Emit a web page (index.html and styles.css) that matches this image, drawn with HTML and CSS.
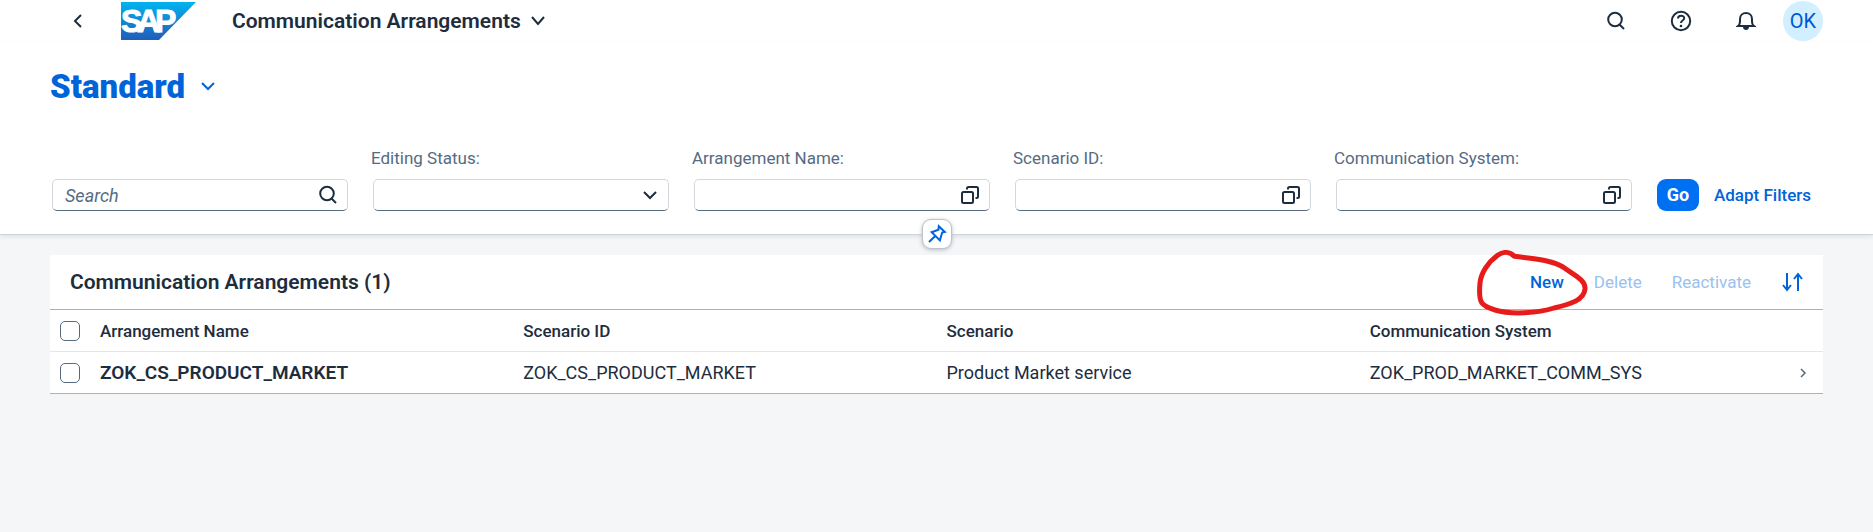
FILE: index.html
```html
<!DOCTYPE html>
<html lang="en">
<head>
<meta charset="utf-8">
<meta name="viewport" content="width=device-width, initial-scale=1">
<title>Communication Arrangements</title>
<link rel="stylesheet" href="styles.css">
</head>
<body>
<header class="shell">
  <button class="icon-btn back" aria-label="Back"><svg width="10" height="16" viewBox="0 0 10 16"><path d="M8 2L2 8l6 6"/></svg></button>
  <svg class="logo" width="75" height="38" viewBox="0 0 75 38" role="img" aria-label="SAP">
    <defs><linearGradient id="logo-fill" x1="0" y1="0" x2="0" y2="1"><stop offset="0" stop-color="#00b4f0"/><stop offset="1" stop-color="#225cb8"/></linearGradient></defs>
    <path class="logo-shape" d="M0 0h75L38 38H0z"/>
    <text class="logo-text" x="0 16 34" y="30">SAP</text>
  </svg>
  <button class="app-title">Communication Arrangements <svg width="14" height="10" viewBox="0 0 14 10"><path d="M1 1l6 7 6-7"/></svg></button>
  <div class="shell-actions">
    <button class="icon-btn" aria-label="Search"><svg width="20" height="20" viewBox="0 0 20 20"><circle cx="9" cy="8.500" r="6.800"/><path d="M13.500 13.500L18 18"/></svg></button>
    <button class="icon-btn" aria-label="Help"><svg width="22" height="22" viewBox="0 0 22 22"><circle cx="11" cy="11" r="9.200"/><path d="M8 8.600c0-4 6.200-3.800 6.200-.3 0 2.300-3.200 2.100-3.200 4.700"/><circle class="dot" cx="11" cy="16" r="1.300"/></svg></button>
    <button class="icon-btn" aria-label="Notifications"><svg width="20" height="20" viewBox="0 0 20 20"><path d="M2 15c1.500-1 2-2.500 2-5V8c0-8 12-8 12 0v2c0 2.500.5 4 2 5z"/><path class="dot" d="M7 16h6c0 4-6 4-6 0z"/></svg></button>
    <button class="avatar" aria-label="User OK">OK</button>
  </div>
</header>

<section class="filter-page">
  <button class="variant">Standard <svg width="14" height="10" viewBox="0 0 14 10"><path d="M1 1l6 6 6-6"/></svg></button>
  <form class="filters">
    <div class="filter">
      <div class="field"><input type="search" placeholder="Search" aria-label="Search arrangements"><svg width="20" height="20" viewBox="0 0 20 20"><circle cx="9" cy="8.500" r="6.800"/><path d="M13.500 13.500L18 18"/></svg></div>
    </div>
    <div class="filter">
      <label for="status">Editing Status:</label>
      <div class="field"><select id="status"><option></option></select><svg width="14" height="10" viewBox="0 0 14 10"><path d="M1 2l6 6 6-6"/></svg></div>
    </div>
    <div class="filter">
      <label for="name">Arrangement Name:</label>
      <div class="field"><input id="name" type="text"><svg width="20" height="20" viewBox="0 0 20 20"><rect x="2" y="7" width="11" height="11" rx="1.500"/><path d="M7 4.500V3.500Q7 2 8.500 2H16.500Q18 2 18 3.500V11.500Q18 13 16.500 13H15.500"/></svg></div>
    </div>
    <div class="filter">
      <label for="scenario">Scenario ID:</label>
      <div class="field"><input id="scenario" type="text"><svg width="20" height="20" viewBox="0 0 20 20"><rect x="2" y="7" width="11" height="11" rx="1.500"/><path d="M7 4.500V3.500Q7 2 8.500 2H16.500Q18 2 18 3.500V11.500Q18 13 16.500 13H15.500"/></svg></div>
    </div>
    <div class="filter">
      <label for="system">Communication System:</label>
      <div class="field"><input id="system" type="text"><svg width="20" height="20" viewBox="0 0 20 20"><rect x="2" y="7" width="11" height="11" rx="1.500"/><path d="M7 4.500V3.500Q7 2 8.500 2H16.500Q18 2 18 3.500V11.500Q18 13 16.500 13H15.500"/></svg></div>
    </div>
    <div class="filter-actions">
      <button class="go" type="button">Go</button>
      <button class="link-btn" type="button">Adapt Filters</button>
    </div>
  </form>
  <button class="pin" aria-label="Pin header"><svg width="20" height="20" viewBox="0 0 20 20"><path d="M11.800 2.200l6 5.700-2.600.6-2.300 7.900-8.200-8.200 6.700-2.400zM8.500 11.700L2 18"/></svg></button>
</section>

<main class="content">
  <div class="toolbar">
    <h2>Communication Arrangements (1)</h2>
    <div class="tools">
      <div class="marked">
        <button class="link-btn">New</button>
        <svg class="ring" width="112" height="66" viewBox="0 0 112 66"><path d="M38 6C34 2 28 1 22 5 12 12 5 23 4 33 2 54 6 56 19 60 35 65 63 63 78 58 95 54 108 50 109 39 110 30 98 25 87 17 74 9 54 9 38 6"/></svg>
      </div>
      <button class="link-btn" disabled>Delete</button>
      <button class="link-btn" disabled>Reactivate</button>
      <button class="link-btn sort" aria-label="Sort"><svg width="22" height="20" viewBox="0 0 22 20"><path d="M6 1v16M2 13l4 5 4-5M17 19V3M13 7l4-5 4 5"/></svg></button>
    </div>
  </div>
  <table class="grid">
    <thead>
      <tr><th class="pick"><input type="checkbox" aria-label="Select all"></th><th>Arrangement Name</th><th>Scenario ID</th><th>Scenario</th><th>Communication System</th><th class="nav"></th></tr>
    </thead>
    <tbody>
      <tr><td class="pick"><input type="checkbox" aria-label="Select ZOK_CS_PRODUCT_MARKET"></td><td class="key">ZOK_CS_PRODUCT_MARKET</td><td>ZOK_CS_PRODUCT_MARKET</td><td>Product Market service</td><td>ZOK_PROD_MARKET_COMM_SYS</td><td class="nav"><svg width="8" height="12" viewBox="0 0 8 12"><path d="M2 2l4 4-4 4"/></svg></td></tr>
    </tbody>
  </table>
</main>
</body>
</html>
```
FILE: styles.css
```css
* { box-sizing: border-box; }

body {
  margin: 0;
  min-height: 100vh;
  background: #f5f6f7;
  color: #1d2d3e;
  font: 18px/24px Roboto, "Liberation Sans", sans-serif;
}

button, input, select { font: inherit; color: inherit; }
button { padding: 0; border: 0; background: none; }
svg { display: block; fill: none; stroke: currentColor; stroke-width: 2; }

.shell {
  display: flex;
  align-items: center;
  height: 42px;
  padding: 0 50px 0 64px;
  background: #fff;
}
.icon-btn { display: grid; place-items: center; width: 28px; height: 32px; }
.icon-btn .dot { fill: currentColor; stroke: none; }
.logo { margin-left: 29px; }
.logo-shape { fill: url(#logo-fill); stroke: none; }
.logo-text { fill: #fff; stroke: #fff; stroke-width: 1; font: bold 32px "Liberation Sans", sans-serif; }
.app-title { display: flex; align-items: center; gap: 10px; margin-left: 36px; font-size: 21px; font-weight: 600; }
.shell-actions { display: flex; align-items: center; gap: 37px; margin-left: auto; }
.avatar { width: 40px; height: 40px; margin-left: -14px; border-radius: 50%; background: #d1efff; color: #0057d2; font-size: 20px; }

.filter-page {
  position: relative;
  padding: 27px 50px 23px;
  background: #fff;
  border-bottom: 1px solid #d0d3d6;
  box-shadow: 0 2px 4px #e0e3e6;
}
.variant { display: flex; align-items: center; gap: 16px; color: #0064d9; font-size: 33px; font-weight: 900; line-height: 36px; }
.filters {
  display: grid;
  grid-template-columns: repeat(5, 1fr) 168px;
  gap: 22px;
  align-items: end;
  margin-top: 41px;
}
.filter { display: grid; gap: 9px; }
.filter label { color: #556b82; font-size: 17px; }
.field { position: relative; margin: 0 1px 0 2px; }
.field input, .field select {
  display: block;
  width: 100%;
  height: 32px;
  padding: 0 40px 0 12px;
  appearance: none;
  border: 1px solid #d3d8de;
  border-bottom-color: #556b82;
  border-radius: 5px;
  background: #fff;
}
.field ::placeholder { color: #556b82; font-style: italic; opacity: 1; }
.field svg { position: absolute; top: 0; bottom: 0; right: 10px; margin: auto 0; pointer-events: none; }
.field select + svg { right: 12px; }
.filter-actions { display: flex; align-items: center; justify-content: space-between; padding: 0 12px 0 2px; }
.go { width: 42px; height: 32px; border-radius: 9px; background: #0070f2; color: #fff; font-weight: 700; }
.link-btn { color: #0064d9; font-size: 17px; font-weight: 500; }
.link-btn:disabled { color: #99c1f0; font-weight: 400; }
.pin {
  position: absolute;
  bottom: -15px;
  left: 50%;
  display: grid;
  place-items: center;
  width: 30px;
  height: 30px;
  margin-left: -15px;
  border: 1px solid #bcc3ca;
  border-radius: 9px;
  background: #fff;
  box-shadow: 0 1px 4px #b5bec8;
  color: #0064d9;
}

.content { margin: 20px 50px 0; background: #fff; }
.toolbar { display: flex; align-items: center; justify-content: space-between; height: 54px; padding: 0 20px; }
.toolbar h2 { margin: 0; font-size: 21px; font-weight: 600; }
.tools { display: flex; align-items: center; gap: 30px; }
.marked { position: relative; }
.ring { position: absolute; left: -54px; top: -20px; stroke: #e81b1b; stroke-width: 5; stroke-linecap: round; stroke-linejoin: round; pointer-events: none; z-index: 1; }

.grid { width: 100%; border-collapse: collapse; table-layout: fixed; }
.grid tr { height: 42px; border-top: 1px solid #e5e5e5; }
.grid thead tr { border-top-color: #a8b2bd; }
.grid tbody tr:last-child { border-bottom: 1px solid #a8b2bd; }
.grid th, .grid td { padding: 0; text-align: left; font-weight: 400; }
.grid th { font-size: 17px; font-weight: 500; }
.grid .key { font-size: 19px; font-weight: 600; }
.grid .pick { width: 50px; padding-left: 10px; }
.grid .nav { width: 30px; color: #556b82; }
.grid .nav svg { margin-left: 6px; stroke-width: 1.500; }
.grid input { display: block; width: 20px; height: 20px; margin: 0; appearance: none; border: 1px solid #556b82; border-radius: 5px; background: #fff; }
```
